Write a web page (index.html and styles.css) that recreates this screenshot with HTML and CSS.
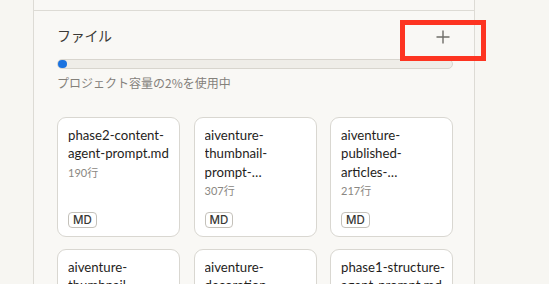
FILE: index.html
```html
<!DOCTYPE html>
<html lang="ja">
<head>
<meta charset="utf-8">
<title>ファイル</title>
<link rel="stylesheet" href="styles.css">
</head>
<body>
<div class="panel">
  <div class="panel-top"></div>
  <section class="files">
    <div class="files-head">
      <h2 class="files-title">ファイル</h2>
      <button class="add-btn" aria-label="追加">
        <svg width="14" height="14" viewBox="0 0 14 14"><path d="M7 0.5V13.5M0.5 7H13.5" stroke="#6f6d68" stroke-width="1.4" fill="none"/></svg>
      </button>
    </div>
    <div class="usage-bar"><div class="usage-fill"></div></div>
    <p class="usage-text">プロジェクト容量の2%を使用中</p>
    <div class="file-grid">
      <div class="file-card">
        <div class="file-name">phase2-content-agent-prompt.md</div>
        <div class="file-lines">190行</div>
        <span class="file-badge">MD</span>
      </div>
      <div class="file-card">
        <div class="file-name">aiventure-thumbnail-prompt-generator.md</div>
        <div class="file-lines">307行</div>
        <span class="file-badge">MD</span>
      </div>
      <div class="file-card">
        <div class="file-name">aiventure-published-articles-summary.md</div>
        <div class="file-lines">217行</div>
        <span class="file-badge">MD</span>
      </div>
      <div class="file-card">
        <div class="file-name">aiventure-thumbnail-guidelines.md</div>
        <div class="file-lines">120行</div>
        <span class="file-badge">MD</span>
      </div>
      <div class="file-card">
        <div class="file-name">aiventure-decoration-rules.md</div>
        <div class="file-lines">98行</div>
        <span class="file-badge">MD</span>
      </div>
      <div class="file-card">
        <div class="file-name">phase1-structure-agent-prompt.md</div>
        <div class="file-lines">150行</div>
        <span class="file-badge">MD</span>
      </div>
    </div>
  </section>
</div>
<div class="highlight"></div>
</body>
</html>
```

FILE: styles.css
```css
* { box-sizing: border-box; }
html, body { margin: 0; padding: 0; }
body {
  background: #f7f6f2;
  font-family: "Lato", "Noto Sans CJK JP", sans-serif;
  color: #1f1e1c;
  width: 549px;
  height: 284px;
  overflow: hidden;
  position: relative;
}
.panel {
  margin-left: 33px;
  width: 442px;
  min-height: 284px;
  background: #f9f8f5;
  border-left: 1px solid #dddbd5;
  border-right: 1px solid #dddbd5;
}
.panel-top {
  height: 11px;
  border-bottom: 1px solid #dddbd5;
}
.files {
  padding: 0 21px 0 23px;
}
.files-head {
  display: flex;
  align-items: center;
  justify-content: space-between;
  height: 32px;
  margin-top: 8px;
}
.files-title {
  margin: 0;
  font-size: 14px;
  font-weight: 400;
  color: #3b3a37;
  font-family: "Noto Sans CJK JP", sans-serif;
  letter-spacing: -0.3px;
}
.add-btn {
  width: 16px;
  height: 16px;
  padding: 0;
  margin: 4px 2px 0 0;
  border: 0;
  background: transparent;
  display: flex;
  align-items: center;
  justify-content: center;
}
.usage-bar {
  margin-top: 8px;
  height: 10px;
  border: 1px solid #d8d5ce;
  border-radius: 6px;
  background: #efede8;
}
.usage-fill {
  width: 9px;
  height: 8px;
  border-radius: 5px;
  background: #1b73e0;
}
.usage-text {
  margin: 5px 0 0;
  font-family: "Noto Sans CJK JP", sans-serif;
  font-size: 12px;
  line-height: 18px;
  color: #84817b;
}
.file-grid {
  margin-top: 25px;
  display: grid;
  grid-template-columns: repeat(3, 1fr);
  column-gap: 13.5px;
  row-gap: 12px;
}
.file-card {
  height: 120px;
  background: #ffffff;
  border: 1px solid #d9d7d1;
  border-radius: 9px;
  padding: 8px 5px 8px 10px;
  display: flex;
  flex-direction: column;
  align-items: flex-start;
}
.file-name {
  flex-shrink: 0;
  font-size: 13.2px;
  line-height: 18.4px;
  color: #1f1e1c;
  display: -webkit-box;
  -webkit-line-clamp: 3;
  -webkit-box-orient: vertical;
  overflow: hidden;
}
.file-lines {
  flex-shrink: 0;
  margin-top: 2px;
  font-size: 11px;
  line-height: 16px;
  color: #8a8782;
}
.file-badge {
  margin-top: auto;
  font-family: "Inter", sans-serif;
  font-size: 11.5px;
  font-weight: 500;
  line-height: 14px;
  padding: 0 4px;
  border: 1px solid #c4c1ba;
  border-radius: 4px;
  color: #3a3936;
  background: #fff;
}
.highlight {
  position: absolute;
  left: 400px;
  top: 20px;
  width: 86px;
  height: 41px;
  border: 5px solid #fd3421;
}
```
